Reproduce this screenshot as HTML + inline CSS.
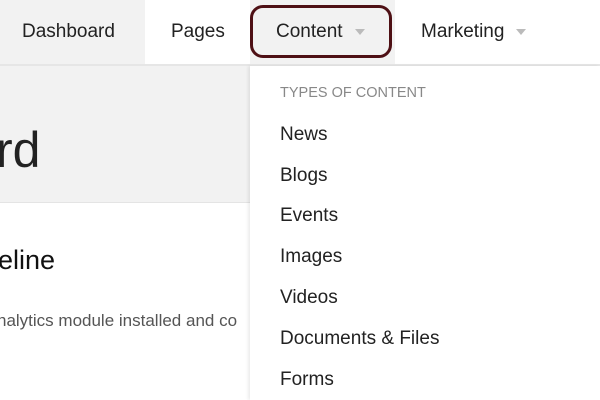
<!DOCTYPE html>
<html><head><style>
*{margin:0;padding:0;box-sizing:border-box}
body{width:600px;height:400px;overflow:hidden;background:#fff;font-family:"Liberation Sans",sans-serif;position:relative;color:#222}
.a{position:absolute;white-space:nowrap}
.nav{font-size:19px;top:21px}
.tri{display:inline-block;width:0;height:0;border-left:5px solid transparent;border-right:5px solid transparent;border-top:6px solid #bbb;vertical-align:middle;margin-left:12px}
.item{left:280px;font-size:19px;color:#222}
</style></head><body>
<div class="a" style="left:0;top:0;width:145px;height:64px;background:#f2f2f2"></div>
<div class="a" style="left:250px;top:0;width:145px;height:64px;background:#f2f2f2"></div>
<div class="a" style="left:0;top:64px;width:600px;height:2px;background:#e6e6e6"></div>
<div class="a" style="left:0;top:66px;width:250px;height:137px;background:#f2f2f2;border-bottom:1px solid #e4e4e4"></div>
<div class="a" style="left:250px;top:5px;width:142px;height:53px;border:3px solid #4e1015;border-radius:13px"></div>
<div class="a nav" style="left:22px">Dashboard</div>
<div class="a nav" style="left:171px">Pages</div>
<div class="a nav" style="left:276px">Content<span class="tri"></span></div>
<div class="a nav" style="left:421px">Marketing<span class="tri"></span></div>
<div class="a" style="left:-4px;top:121px;font-size:50px;color:#222">rd</div>
<div class="a" style="left:-2px;top:245px;font-size:27px;color:#111">eline</div>
<div class="a" style="left:-3px;top:311px;font-size:17px;color:#555">nalytics module installed and co</div>
<div class="a" style="left:250px;top:66px;width:350px;height:334px;background:#fff;box-shadow:-2px 0 3px rgba(0,0,0,0.08)"></div>
<div class="a" style="left:280px;top:85px;font-size:14.5px;color:#888">TYPES OF CONTENT</div>
<div class="a item" style="top:124px">News</div>
<div class="a item" style="top:165px">Blogs</div>
<div class="a item" style="top:205px">Events</div>
<div class="a item" style="top:246px">Images</div>
<div class="a item" style="top:287px">Videos</div>
<div class="a item" style="top:328px">Documents &amp; Files</div>
<div class="a item" style="top:369px">Forms</div>
</body></html>
